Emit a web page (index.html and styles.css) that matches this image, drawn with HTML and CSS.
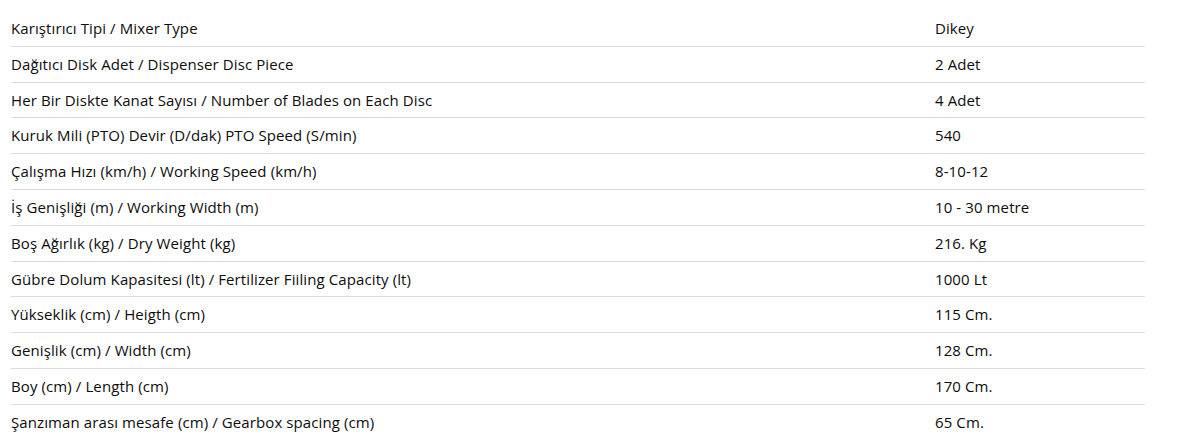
FILE: index.html
```html
<!DOCTYPE html>
<html lang="tr">
<head>
<meta charset="utf-8">
<title>Teknik Özellikler</title>
<link rel="stylesheet" href="styles.css">
</head>
<body>
<table class="spec-table">
  <tbody>
    <tr><td class="spec-name">Karıştırıcı Tipi / Mixer Type</td><td class="spec-value">Dikey</td></tr>
    <tr><td class="spec-name">Dağıtıcı Disk Adet / Dispenser Disc Piece</td><td class="spec-value">2 Adet</td></tr>
    <tr><td class="spec-name">Her Bir Diskte Kanat Sayısı / Number of Blades on Each Disc</td><td class="spec-value">4 Adet</td></tr>
    <tr><td class="spec-name">Kuruk Mili (PTO) Devir (D/dak) PTO Speed (S/min)</td><td class="spec-value">540</td></tr>
    <tr><td class="spec-name">Çalışma Hızı (km/h) / Working Speed (km/h)</td><td class="spec-value">8-10-12</td></tr>
    <tr><td class="spec-name">İş Genişliği (m) / Working Width (m)</td><td class="spec-value">10 - 30 metre</td></tr>
    <tr><td class="spec-name">Boş Ağırlık (kg) / Dry Weight (kg)</td><td class="spec-value">216. Kg</td></tr>
    <tr><td class="spec-name">Gübre Dolum Kapasitesi (lt) / Fertilizer Fiiling Capacity (lt)</td><td class="spec-value">1000 Lt</td></tr>
    <tr><td class="spec-name">Yükseklik (cm) / Heigth (cm)</td><td class="spec-value">115 Cm.</td></tr>
    <tr><td class="spec-name">Genişlik (cm) / Width (cm)</td><td class="spec-value">128 Cm.</td></tr>
    <tr><td class="spec-name">Boy (cm) / Length (cm)</td><td class="spec-value">170 Cm.</td></tr>
    <tr><td class="spec-name">Şanzıman arası mesafe (cm) / Gearbox spacing (cm)</td><td class="spec-value">65 Cm.</td></tr>
  </tbody>
</table>
</body>
</html>
```

FILE: styles.css
```css
html, body {
  margin: 0;
  padding: 0;
  background: #ffffff;
}

body {
  font-family: "Open Sans", "Liberation Sans", sans-serif;
  font-size: 15px;
  letter-spacing: 0.1px;
  color: #0d0d0d;
}

.spec-table {
  margin: 11px 0 0 11px;
  width: 1134px;
  border-collapse: collapse;
  table-layout: fixed;
}

.spec-table td {
  padding: 6px 0;
  line-height: 22.8px;
  border-bottom: 1px solid #dddddd;
  vertical-align: middle;
  white-space: nowrap;
}

.spec-name {
  width: 924px;
}
```
